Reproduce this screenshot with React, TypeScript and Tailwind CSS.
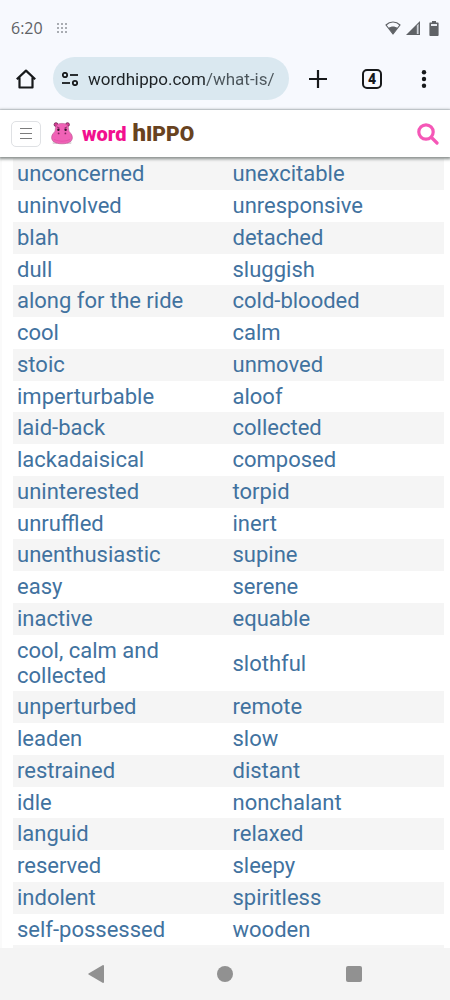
import React, { useState } from "react";

const synonyms: [string, string][] = [
  ["unconcerned", "unexcitable"],
  ["uninvolved", "unresponsive"],
  ["blah", "detached"],
  ["dull", "sluggish"],
  ["along for the ride", "cold-blooded"],
  ["cool", "calm"],
  ["stoic", "unmoved"],
  ["imperturbable", "aloof"],
  ["laid-back", "collected"],
  ["lackadaisical", "composed"],
  ["uninterested", "torpid"],
  ["unruffled", "inert"],
  ["unenthusiastic", "supine"],
  ["easy", "serene"],
  ["inactive", "equable"],
  ["cool, calm and collected", "slothful"],
  ["unperturbed", "remote"],
  ["leaden", "slow"],
  ["restrained", "distant"],
  ["idle", "nonchalant"],
  ["languid", "relaxed"],
  ["reserved", "sleepy"],
  ["indolent", "spiritless"],
  ["self-possessed", "wooden"],
];

function StatusBar() {
  return (
    <div className="flex h-14 items-center justify-between px-[11px] text-[#5f6266]">
      <div className="flex items-center gap-[14px]">
        <span className="font-['Open_Sans',sans-serif] text-base leading-5">6:20</span>
        <svg width="10" height="10" viewBox="0 0 10 10" fill="#a9acb2" aria-hidden="true">
          {[0, 4, 8].map((y) => [0, 4, 8].map((x) => <rect key={`${x}-${y}`} x={x} y={y} width="2" height="2" />))}
        </svg>
      </div>
      <div className="flex items-center gap-[5px]">
        <svg width="16" height="14" viewBox="0 0 16 14" aria-hidden="true">
          <path d="M1 4C5 0 11 0 15 4L8 13Z" fill="none" stroke="#5f6266" strokeWidth="1.2" strokeLinejoin="round" />
          <path d="M3.6 7C6 5 10 5 12.4 7L8 13Z" fill="#5f6266" />
        </svg>
        <svg width="14" height="14" viewBox="0 0 14 14" aria-hidden="true">
          <path d="M0 14L14 0V14Z" fill="#5f6266" />
          <path d="M10.8 4.5V13H12.6V2.8Z" fill="#cfd2d8" />
        </svg>
        <svg className="ml-1" width="10" height="15" viewBox="0 0 10 15" aria-hidden="true">
          <path d="M3 0H7V1.6H9Q9.6 1.6 9.6 2.4V14Q9.6 15 8.8 15H1.2Q.4 15 .4 14V2.4Q.4 1.6 1 1.6H3Z" fill="#5f6266" />
          <rect x="2" y="3" width="6" height="2" fill="#e9ecf2" />
        </svg>
      </div>
    </div>
  );
}

function BrowserBar() {
  const [url, setUrl] = useState("wordhippo.com/what-is/");

  return (
    <div className="flex h-[54px] items-start border-b border-[#e3e7ef] pr-[14px] pl-[14px] text-[#17191b]">
      <button type="button" aria-label="Home" className="mt-[11px] flex size-6 shrink-0 items-center justify-center">
        <svg width="20" height="20" viewBox="0 0 20 20" fill="none" stroke="currentColor" strokeWidth="2.2">
          <path d="M.8 10.2L10 1.6L19.2 10.2M3.5 8.5V18.5H16.5V8.5" strokeLinejoin="round" />
        </svg>
      </button>
      <div className="mt-px ml-[15px] flex h-[43px] min-w-0 flex-1 items-center rounded-full bg-[#dae8f0] pl-[9px]">
        <button type="button" aria-label="Site settings" className="shrink-0">
          <svg width="16" height="14" viewBox="0 0 16 14" fill="none" stroke="currentColor" strokeWidth="1.8">
            <circle cx="3" cy="3" r="2.2" />
            <path d="M8 3H16" />
            <circle cx="13" cy="11" r="2.2" />
            <path d="M0 11H8" />
          </svg>
        </button>
        <input
          type="text"
          aria-label="Address"
          value={url}
          onChange={(e) => setUrl(e.target.value)}
          className="ml-[10px] min-w-0 flex-1 bg-[linear-gradient(90deg,#1d2225_118px,#4b555b_118px)] bg-clip-text font-['Roboto',sans-serif] text-[17px] leading-6 text-transparent caret-black outline-none"
        />
      </div>
      <button type="button" aria-label="New tab" className="mt-[11px] ml-[17px] flex size-6 shrink-0 items-center justify-center">
        <svg width="18" height="18" viewBox="0 0 18 18" stroke="currentColor" strokeWidth="2.2">
          <path d="M9 0V18M0 9H18" />
        </svg>
      </button>
      <button type="button" aria-label="Open tabs" className="mt-[13px] ml-8 flex size-5 shrink-0 items-center justify-center rounded-[5px] border-2 border-current font-['Roboto',sans-serif] text-sm leading-4 font-black">
        4
      </button>
      <button type="button" aria-label="More options" className="mt-[11px] ml-[30px] flex size-6 shrink-0 items-center justify-center">
        <svg width="6" height="18" viewBox="0 0 6 18" fill="currentColor">
          <circle cx="3" cy="2.2" r="2.2" />
          <circle cx="3" cy="9" r="2.2" />
          <circle cx="3" cy="15.8" r="2.2" />
        </svg>
      </button>
    </div>
  );
}

function Hippo() {
  return (
    <svg width="22" height="23" viewBox="0 0 22 23" aria-hidden="true">
      <path d="M2.5 17L2 21.5H6M19.5 17L20 21.5H16" fill="#e8e4e6" stroke="#c9c4c8" strokeWidth=".6" />
      <circle cx="5" cy="2.6" r="1.9" fill="#d93d96" stroke="#6d1f4f" strokeWidth=".8" />
      <circle cx="16.5" cy="2.6" r="1.9" fill="#d93d96" stroke="#6d1f4f" strokeWidth=".8" />
      <path d="M11 1.4C6 1.4 4.4 3.6 4.3 8C4.2 10.5 .6 11.5 .6 15.5C.6 19.8 5 21.8 11 21.8S21.4 19.8 21.4 15.5C21.4 11.5 17.8 10.5 17.7 8C17.5 3.6 16 1.4 11 1.4Z" fill="#f062b6" stroke="#b9568f" strokeWidth=".6" />
      <path d="M6 5L8.500 6M16 5L13.500 6" stroke="#8b2864" strokeWidth=".9" />
      <circle cx="7.4" cy="7.8" r="1.2" fill="#33142a" />
      <circle cx="14.6" cy="7.8" r="1.2" fill="#33142a" />
      <circle cx="7.6" cy="11.4" r=".9" fill="#7e245c" />
      <circle cx="14.4" cy="11.4" r=".9" fill="#7e245c" />
      <path d="M3 17.5Q11 21 19 17.5" fill="none" stroke="#e04fa6" strokeWidth=".7" />
    </svg>
  );
}

function SiteHeader() {
  return (
    <header className="relative z-10 flex h-[47px] items-center bg-white pr-[11px] pl-[11px] shadow-[0_1px_3px_1px_#858b89]">
      <button type="button" aria-label="Menu" className="flex h-[26px] w-[30px] items-center justify-center rounded-[5px] border border-[#dfe1e4]">
        <svg width="12" height="11" viewBox="0 0 12 11" stroke="#7c7c7c" strokeWidth="1">
          <path d="M0 .5H12M0 5.5H12M0 10.5H12" />
        </svg>
      </button>
      <a href="/" aria-label="word hippo" className="ml-[10px] flex items-center font-['Roboto',sans-serif] leading-6 font-black">
        <Hippo />
        <span className="ml-[9px] text-[20px] text-[#f2108f]">word</span>
        <span className="ml-[6px] text-[21px] text-[#68431f]">
          <span className="text-[24px]">h</span>IPPO
        </span>
      </a>
      <button type="button" aria-label="Search" className="ml-auto">
        <svg width="22" height="22" viewBox="0 0 22 22" fill="none" stroke="#f557b7" strokeWidth="3.2" strokeLinecap="round">
          <circle cx="9" cy="9" r="7.2" />
          <path d="M14.5 14.5L20 20" />
        </svg>
      </button>
    </header>
  );
}

export default function App() {
  return (
    <div className="flex min-h-screen flex-col bg-white">
      <div className="bg-[#f7f9fe]">
        <StatusBar />
        <BrowserBar />
      </div>
      <SiteHeader />
      <main className="flex-1 border-l-2 border-[#fafafa] pt-px pr-[6px] pl-[11px]">
        <table className="w-full table-fixed font-['Roboto',sans-serif] text-[22px] leading-[25px] text-[#41729f]">
          <tbody>
            {synonyms.map(([left, right]) => (
              <tr key={left} className="group odd:bg-[#f5f5f5]">
                {[left, right].map((word) => (
                  <td key={word} className="px-1 pt-[3px] pb-1 group-nth-[4n]:pb-[3px]">
                    <a href={`#${word}`}>{word}</a>
                  </td>
                ))}
              </tr>
            ))}
          </tbody>
        </table>
        <div className="h-[3px] bg-[#f5f5f5]" />
      </main>
      <nav aria-label="System" className="flex h-[52px] items-center justify-around bg-[#f4f4f4] px-8">
        <button type="button" aria-label="Back">
          <svg width="16" height="18" viewBox="0 0 16 18" fill="#919191">
            <path d="M15 0Q16 0 16 1V17Q16 18 15 18L.5 9.5Q0 9 .5 8.5Z" />
          </svg>
        </button>
        <button type="button" aria-label="Home screen" className="size-4 rounded-full bg-[#919191]" />
        <button type="button" aria-label="Recent apps" className="size-4 rounded-[2px] bg-[#919191]" />
      </nav>
    </div>
  );
}
